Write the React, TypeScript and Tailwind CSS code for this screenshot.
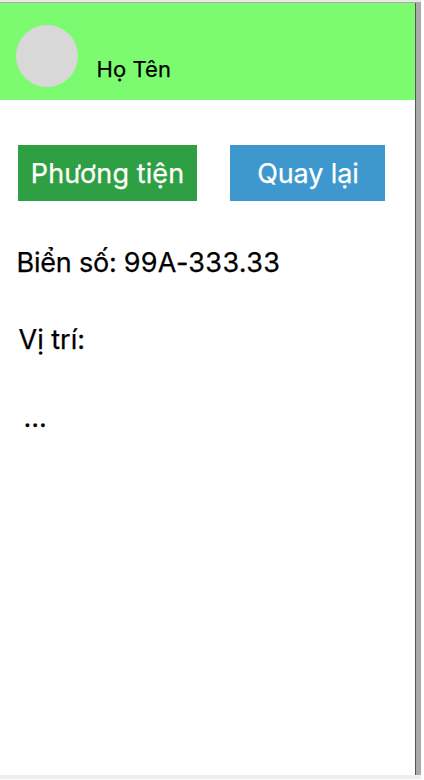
export default function App() {
  return (
    <div className="flex h-[780px] w-[424px] flex-col overflow-hidden bg-white font-['Inter',sans-serif] text-black [-webkit-text-stroke:0.25px]">
      <div className="h-[2px] w-[421px] bg-[#e8e8e8]" />
      <div className="h-px w-[421px] bg-[#aaaaaa]" />
      <div className="flex h-[772px]">
        <main className="w-[415px]">
          <header className="flex h-[97px] items-start bg-[#7cfb70] pl-[16px] pt-[22px]">
            <div className="size-[62px] rounded-full bg-[#d8d8d8]" />
            <span className="ml-[18.5px] mt-[31px] text-[22px] leading-[27px] tracking-[0.1px]">Họ Tên</span>
          </header>
          <div className="flex gap-[33px] pl-[18px] pt-[45px] text-[27px] leading-[56px] text-white">
            <button className="h-[56px] w-[179px] bg-[#2f9f43] pt-px tracking-[0.1px]">Phương tiện</button>
            <button className="h-[56px] w-[155px] bg-[#3e97cd] pl-px pt-px tracking-[-0.1px]">Quay lại</button>
          </div>
          <p className="mt-[45px] flex gap-[7px] pl-[16.5px] text-[27px] leading-[33px]">
            <span className="tracking-[-0.2px]">Biển số:</span>
            <span className="tracking-[0.35px]">99A-333.33</span>
          </p>
          <p className="mt-[44px] pl-[18.5px] text-[27px] leading-[33px]">Vị trí:</p>
          <p className="mt-[45px] pl-[23.5px] text-[27px] leading-[33px]">...</p>
        </main>
        <div className="w-px bg-[#555555]" />
        <div className="w-[5px] bg-[#aaaaaa]" />
      </div>
      <div className="h-[4px] w-[421px] bg-[#eeeeee]" />
    </div>
  );
}
